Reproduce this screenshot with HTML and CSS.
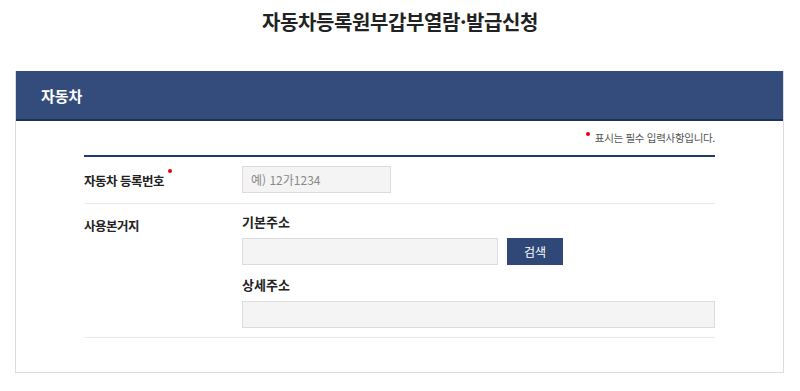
FILE: index.html
```html
<!DOCTYPE html>
<html lang="ko">
<head>
    <meta charset="UTF-8">
    <meta name="viewport" content="width=device-width, initial-scale=1.0">
    <title>자동차등록원부갑부열람·발급신청</title>
    <link rel="stylesheet" href="styles.css">
</head>
<body>

    <h1 class="pageTitle">자동차등록원부갑부열람·발급신청</h1>

    <div class="card">
        <div class="cardHead">자동차</div>

        <div class="cardBody">
            <p class="note"><span class="req"></span>표시는 필수 입력사항입니다.</p>

            <div class="formTable">
                <div class="row">
                    <div class="label">자동차 등록번호<span class="req"></span></div>
                    <div class="field">
                        <input type="text" class="inp inpShort" placeholder="예) 12가1234">
                    </div>
                </div>

                <div class="row rowAddr">
                    <div class="label">사용본거지</div>
                    <div class="field">
                        <div class="subLabel">기본주소</div>
                        <div class="inline">
                            <input type="text" class="inp inpMid">
                            <button class="searchBtn">검색</button>
                        </div>
                        <div class="subLabel">상세주소</div>
                        <input type="text" class="inp inpFull">
                    </div>
                </div>
            </div>
        </div>
    </div>

</body>
</html>
```

FILE: styles.css
```css
body{
    margin: 0;
    padding: 0;
    font-family: "Noto Sans CJK KR", "Noto Sans", sans-serif;
    color: #222;
    background: #fff;
}

.pageTitle{
    margin: 0;
    padding-top: 7px;
    height: 30px;
    line-height: 30px;
    font-size: 20px;
    font-weight: bold;
    text-align: center;
    color: #222;
    letter-spacing: -0.4px;
}

.card{
    margin: 34px 16px 0 15px;
    border: 1px solid #dcdcdc;
    border-top: none;
}

.cardHead{
    height: 48px;
    line-height: 50px;
    padding-left: 25px;
    background: #344c7b;
    border-bottom: 2px solid #1e3157;
    color: #fff;
    font-size: 15px;
    font-weight: bold;
}

.cardBody{
    padding: 0 68px 34px 68px;
}

.note{
    margin: 0;
    padding-top: 8px;
    height: 26px;
    line-height: 18px;
    text-align: right;
    font-size: 10.5px;
    color: #555;
    letter-spacing: -0.3px;
}
.note .req{
    margin-right: 5px;
    vertical-align: 6px;
}

.req{
    display: inline-block;
    width: 4px;
    height: 4px;
    border-radius: 50%;
    background: #e60012;
}
.label .req{
    margin-left: 4px;
    vertical-align: 13px;
}

.formTable{
    border-top: 2px solid #1f3a6e;
}

.row{
    display: flex;
    padding: 9px 0 8px 0;
    border-bottom: 1px solid #eaeaea;
}

.label{
    width: 158px;
    flex-shrink: 0;
    font-size: 12.5px;
    font-weight: bold;
    line-height: 29px;
    color: #222;
    letter-spacing: -0.5px;
}

.field{
    flex: 1;
}

.inp{
    box-sizing: border-box;
    height: 27px;
    border: 1px solid #dcdcdc;
    background: #f4f4f4;
    padding: 0 8px;
    font-family: inherit;
    font-size: 12px;
    color: #333;
    display: block;
}
.inp::placeholder{
    color: #888;
}
.inpShort{
    width: 149px;
}
.inpMid{
    width: 256px;
}
.inpFull{
    width: 100%;
}

.rowAddr{
    padding: 8px 0 9px 0;
}
.rowAddr .label{
    line-height: 28px;
}

.subLabel{
    font-size: 13px;
    font-weight: bold;
    line-height: 18px;
    padding: 1px 0 7px 0;
    color: #222;
}

.inline{
    display: flex;
    gap: 9px;
    margin-bottom: 10px;
}

.searchBtn{
    width: 56px;
    height: 27px;
    border: none;
    background: #2f4877;
    color: #fff;
    font-family: inherit;
    font-size: 12px;
    cursor: pointer;
}
```
